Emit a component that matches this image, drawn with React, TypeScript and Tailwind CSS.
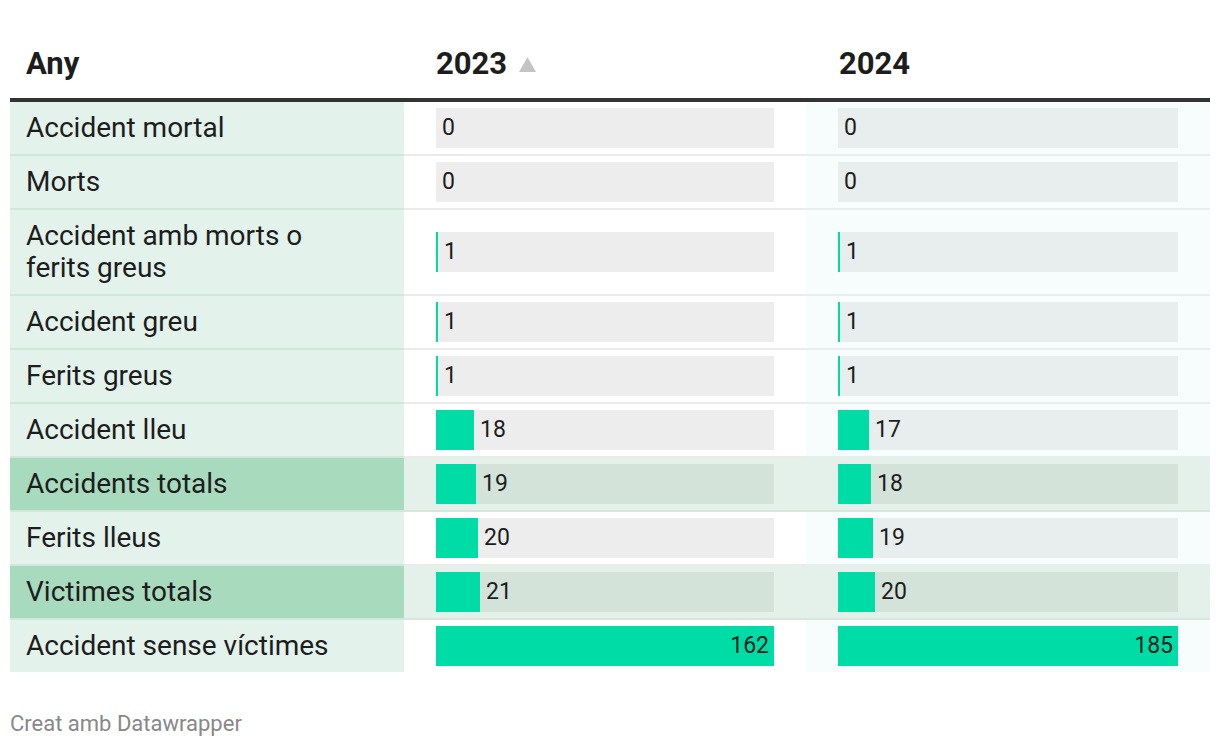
import React from 'react'

type Row = { label: string; v23: number; v24: number; highlight?: boolean }

const rows: Row[] = [
  { label: 'Accident mortal', v23: 0, v24: 0 },
  { label: 'Morts', v23: 0, v24: 0 },
  { label: 'Accident amb morts o ferits greus', v23: 1, v24: 1 },
  { label: 'Accident greu', v23: 1, v24: 1 },
  { label: 'Ferits greus', v23: 1, v24: 1 },
  { label: 'Accident lleu', v23: 18, v24: 17 },
  { label: 'Accidents totals', v23: 19, v24: 18, highlight: true },
  { label: 'Ferits lleus', v23: 20, v24: 19 },
  { label: 'Victimes totals', v23: 21, v24: 20, highlight: true },
  { label: 'Accident sense víctimes', v23: 162, v24: 185 },
]

const MAX23 = 162
const MAX24 = 185

function Bar({ value, max, track }: { value: number; max: number; track: number }) {
  const w = Math.round((value / max) * track)
  const inside = value / max > 0.8
  return (
    <div className="flex h-[40px] items-center">
      <div className="h-full bg-[#00dca6] flex items-center justify-end shrink-0" style={{ width: w }}>
        {inside && <span className="pr-[5px] text-[23px] text-[#1d1d1d]">{value}</span>}
      </div>
      {!inside && <span className="ml-[6px] text-[23px] text-[#1d1d1d]">{value}</span>}
    </div>
  )
}

export default function App() {
  return (
    <div className="w-[1220px] min-h-[748px] bg-white px-[10px] pt-[30px] font-['Roboto',sans-serif] text-[#1d1d1d]">
      {/* header */}
      <div className="grid grid-cols-[394px_402px_404px] h-[72px] items-center border-b-[4px] border-[#333333] text-[31px] font-bold">
        <div className="pl-[16px]">Any</div>
        <div className="pl-[32px] flex items-center gap-[12px]">
          2023
          <svg width="17" height="15" viewBox="0 0 17 15" className="mt-[1px]">
            <polygon points="8.5,0 17,15 0,15" fill="#c4c4c4" />
          </svg>
        </div>
        <div className="pl-[33px]">2024</div>
      </div>

      {/* body */}
      <div>
        {rows.map((r, i) => {
          const last = i === rows.length - 1
          return (
            <div key={r.label} className="grid grid-cols-[394px_402px_404px]">
              <div
                className={`flex items-center pl-[16px] pr-[50px] py-[10px] text-[28px] leading-[32px] ${
                  r.highlight ? 'bg-[#a8dabd]' : 'bg-[#e3f2eb]'
                } ${last ? '' : 'border-b-2 border-[#d3e6dc]'}`}
              >
                {r.label}
              </div>
              <div
                className={`flex items-center px-[32px] py-[6px] ${r.highlight ? 'bg-[#e3f1ea]' : 'bg-white'} ${
                  last ? '' : r.highlight ? 'border-b-2 border-[#d8e6de]' : 'border-b-2 border-[#ebebeb]'
                }`}
              >
                <div className={`w-full ${r.highlight ? 'bg-[#d4e3da]' : 'bg-[#ededed]'}`}>
                  <Bar value={r.v23} max={MAX23} track={338} />
                </div>
              </div>
              <div
                className={`flex items-center px-[32px] py-[6px] ${r.highlight ? 'bg-[#e3f1ea]' : 'bg-[#f7fdfd]'} ${
                  last ? '' : r.highlight ? 'border-b-2 border-[#d8e6de]' : 'border-b-2 border-[#e8eeee]'
                }`}
              >
                <div className={`w-full ${r.highlight ? 'bg-[#d4e3da]' : 'bg-[#e8eded]'}`}>
                  <Bar value={r.v24} max={MAX24} track={340} />
                </div>
              </div>
            </div>
          )
        })}
      </div>

      <div className="mt-[35px] text-[22px] text-[#888888]">Creat amb Datawrapper</div>
    </div>
  )
}
